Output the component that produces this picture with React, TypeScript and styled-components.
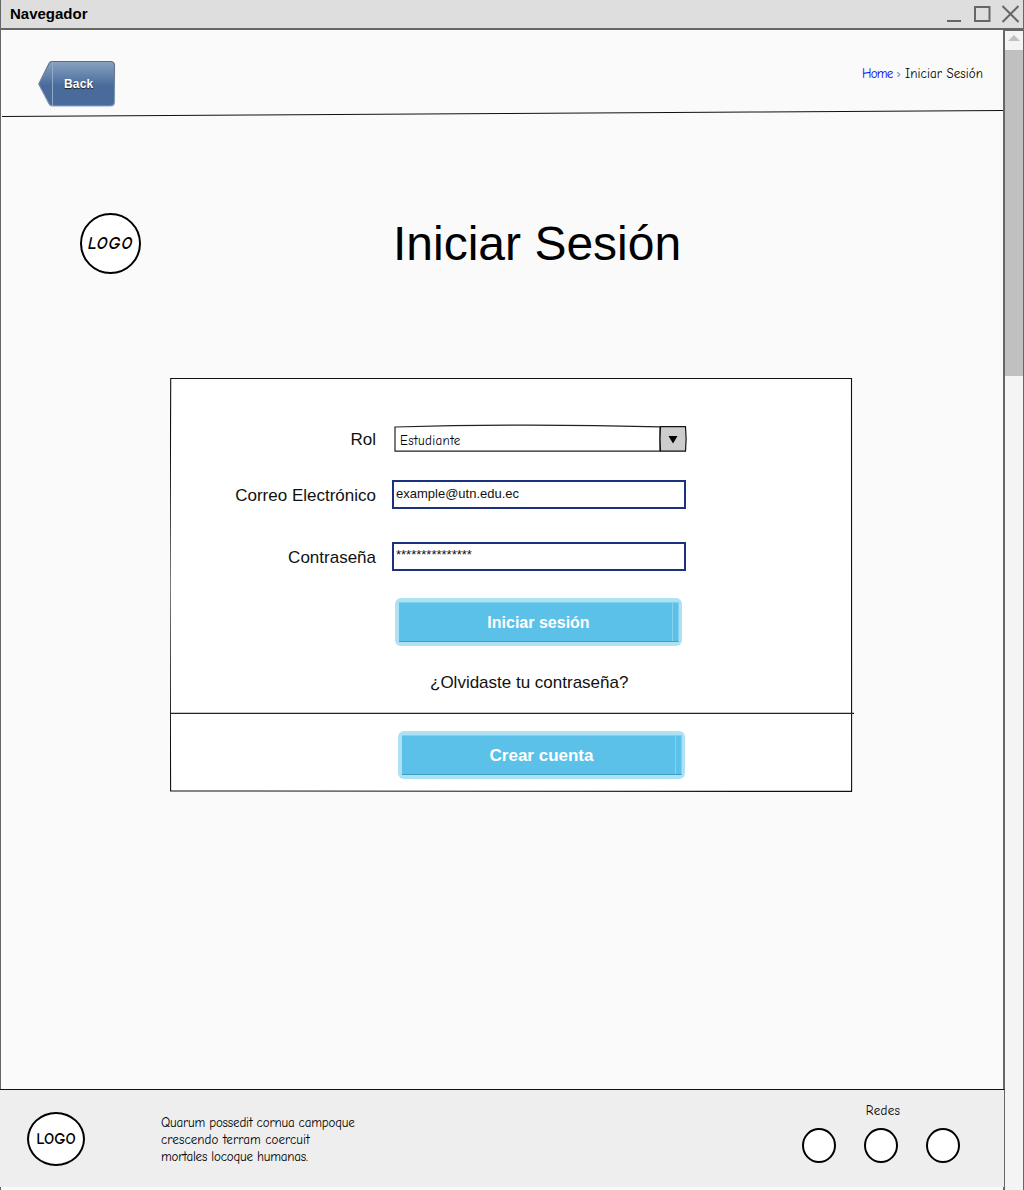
import React from "react";
import styled, { createGlobalStyle } from "styled-components";

const hand = '"Comic Sans MS", "Comic Neue", "Open Sans", sans-serif';

const GlobalStyle = createGlobalStyle`
  *, *::before, *::after { box-sizing: border-box; }
  body {
    margin: 0;
    color: #000;
    background: #fafafa;
    font-family: Arial, "Liberation Sans", sans-serif;
  }
`;

const Window = styled.div`
  display: flex;
  flex-direction: column;
  width: 1024px;
  height: 1190px;
  overflow: hidden;
  background: #fafafa;
`;

const TitleBar = styled.header`
  display: flex;
  align-items: center;
  justify-content: space-between;
  flex: none;
  height: 30px;
  padding: 0 4px 0 9px;
  border: solid #666;
  border-width: 0 1px 2px;
  background: #dedede;
`;

const WindowTitle = styled.span`
  font-size: 15px;
  font-weight: 700;
  line-height: 16px;
`;

const WindowControls = styled.svg`
  display: block;
  width: 74px;
  height: 20px;
  margin-right: -2px;
`;

const Body = styled.div`
  display: flex;
  flex: 1;
  min-height: 0;
`;

const Viewport = styled.main`
  display: flex;
  flex-direction: column;
  width: 1003px;
`;

const Content = styled.div`
  flex: none;
  height: 1059px;
  border-left: 1px solid #666;
`;

const ScrollTrack = styled.aside`
  width: 21px;
  border: solid #666;
  border-width: 1px 1px 0 2px;
  background: #f4f4f4;
`;

const ScrollUp = styled.div`
  display: flex;
  justify-content: center;
  height: 19px;
  padding-top: 4px;
`;

const ScrollThumb = styled.div`
  height: 326px;
  background: #c0c0c0;
`;

const NavBar = styled.nav`
  display: flex;
  justify-content: space-between;
  height: 79px;
  padding: 30px 20px 0 36px;
`;

const BackButton = styled.div`
  display: grid;
  width: 79px;
  height: 48px;
  & > * { grid-area: 1 / 1; }
`;

const BackLabel = styled.span`
  align-self: center;
  padding: 0 0 1px 27px;
  color: #fff;
  font-size: 12px;
  font-weight: 700;
  line-height: 14px;
  letter-spacing: 0.15px;
  text-shadow: 0 1px 1px #222;
`;

const Hand = styled.span<{ $spacing?: number; $color?: string }>`
  font-family: ${hand};
  font-size: 13px;
  line-height: 17px;
  letter-spacing: ${(p) => p.$spacing ?? 0}px;
  color: ${(p) => p.$color ?? "#000"};
  white-space: nowrap;
`;

const Breadcrumbs = styled.div`
  display: flex;
  gap: 4px;
  padding-top: 5px;
`;

const HeaderRule = styled.svg`
  display: block;
  width: 1002px;
  height: 10px;
`;

const Hero = styled.section`
  display: flex;
  align-items: center;
  height: 63px;
  margin-top: 93px;
  padding-left: 79px;
`;

const Logo = styled.div<{ $w: number; $h: number }>`
  display: flex;
  align-items: center;
  justify-content: center;
  flex: none;
  width: ${(p) => p.$w}px;
  height: ${(p) => p.$h}px;
  border: 2px solid #000;
  border-radius: 50%;
  background: #fff;
`;

const LogoText = styled.span<{ $large?: boolean }>`
  font-family: ${hand};
  font-size: ${(p) => (p.$large ? 17 : 16)}px;
  font-style: ${(p) => (p.$large ? "italic" : "normal")};
  font-weight: 700;
  line-height: 18px;
  letter-spacing: ${(p) => (p.$large ? 0.9 : 0)}px;
`;

const Heading = styled.h1`
  margin: 0 0 0 252px;
  font-size: 48px;
  font-weight: 400;
  line-height: 56px;
`;

const Card = styled.section`
  display: grid;
  width: 684px;
  height: 414px;
  margin: 103px 0 0 169px;
  & > * { grid-area: 1 / 1; }
`;

const CardOutline = styled.svg`
  display: block;
  width: 684px;
  height: 414px;
`;

const CardContent = styled.div`
  display: flex;
  flex-direction: column;
  padding-top: 46px;
`;

const Field = styled.div<{ $height: number; $after: number }>`
  display: grid;
  grid-template-columns: 206px 296px;
  column-gap: 16px;
  align-items: center;
  height: ${(p) => p.$height}px;
  margin-bottom: ${(p) => p.$after}px;
`;

const Label = styled.span`
  padding-top: 2px;
  color: #111;
  font-size: 17px;
  line-height: 20px;
  text-align: right;
`;

const SelectBox = styled.div`
  display: grid;
  height: 30px;
  & > * { grid-area: 1 / 1; }
`;

const SelectValue = styled.div`
  display: flex;
  align-items: center;
  padding: 2px 0 0 8px;
`;

const TextBox = styled.div<{ $top: number }>`
  width: 294px;
  height: 29px;
  padding: ${(p) => p.$top}px 2px 0;
  border: 2px solid #1b3281;
  background: #fff;
  color: #111;
  font-size: 13px;
  line-height: 16px;
`;

const ActionButton = styled.div<{ $left: number }>`
  display: flex;
  flex: none;
  width: 287px;
  height: 48px;
  margin-left: ${(p) => p.$left}px;
  padding: 4px 3px 4px 4px;
  border-radius: 6px;
  background: #ade1f4;
`;

const ActionFace = styled.div<{ $size: number }>`
  display: flex;
  align-items: center;
  justify-content: center;
  flex: 1;
  padding-top: 2px;
  border: solid;
  border-width: 1px 1px 1px 0;
  border-color: #82d0ee #82d0ee #3e9dc1;
  background: linear-gradient(#86d2ef, #86d2ef) right 5px top / 1px 100% no-repeat, #5bc1e9;
  color: #fff;
  font-size: ${(p) => p.$size}px;
  font-weight: 700;
  line-height: 20px;
`;

const ForgotLink = styled.div`
  height: 20px;
  margin: 27px 0 0 260px;
  color: #111;
  font-size: 17px;
  line-height: 20px;
`;

const CardFooter = styled.div`
  padding-top: 38px;
`;

const Footer = styled.footer`
  display: flex;
  flex: none;
  width: 1005px;
  height: 98px;
  position: relative;
  padding: 22px 0 0 27px;
  border-top: 1px solid #111;
  border-right: 1px solid #666;
  background: #eee;
`;

const Blurb = styled.div`
  display: flex;
  flex: none;
  flex-direction: column;
  width: 200px;
  margin: 2px 0 0 76px;
`;

const Social = styled.div`
  display: flex;
  flex: none;
  flex-direction: column;
  align-items: center;
  width: 158px;
  margin: -10px 0 0 441px;
`;

const SocialTitle = styled.div`
  display: flex;
  padding-left: 4px;
`;

const SocialRow = styled.div`
  display: flex;
  justify-content: space-between;
  width: 158px;
  margin-top: 9px;
`;

const SocialDot = styled.div`
  width: 34px;
  height: 35px;
  border: 2px solid #000;
  border-radius: 50%;
  background: #fff;
`;

const WindowEdge = styled.div`
  flex: 1;
  border-left: 1px solid #666;
`;

export default function App() {
  return (
    <>
      <GlobalStyle />
      <Window>
        <TitleBar>
          <WindowTitle>Navegador</WindowTitle>
          <WindowControls viewBox="0 0 74 20" fill="none" stroke="#666" strokeWidth="2">
            <path d="M0 17H14M28 3H42.5V17H28Z" />
            <path d="M55.5 2L71.5 18M71.5 2L55.5 18" />
          </WindowControls>
        </TitleBar>
        <Body>
          <Viewport>
            <Content>
              <NavBar>
                <BackButton>
                  <svg width="79" height="48" viewBox="0 0 79 48">
                    <defs>
                      <linearGradient id="back" x1="0" y1="0" x2="0" y2="1">
                        <stop offset="0" stopColor="#89a2c1" />
                        <stop offset="0.55" stopColor="#486b9b" />
                        <stop offset="1" stopColor="#486b9b" />
                      </linearGradient>
                      <linearGradient id="rim" x1="0" y1="0" x2="0" y2="1">
                        <stop offset="0" stopColor="#5c6b80" />
                        <stop offset="1" stopColor="#8ba3c4" />
                      </linearGradient>
                    </defs>
                    <path d="M15 1.5H73.5Q77.5 1.5 77.5 5.5V42Q77.5 46 73.5 46H15Q13 46 12 44L1.7 24L12 3.5Q13 1.5 15 1.5Z" fill="url(#back)" stroke="url(#rim)" strokeWidth="1.1" />
                    <path d="M15.5 2V46" stroke="#91a8c6" />
                  </svg>
                  <BackLabel>Back</BackLabel>
                </BackButton>
                <Breadcrumbs>
                  <Hand $color="#00f" $spacing={-0.75}>Home</Hand>
                  <Hand $color="#777">›</Hand>
                  <Hand $spacing={0.08}>Iniciar Sesión</Hand>
                </Breadcrumbs>
              </NavBar>
              <HeaderRule viewBox="0 0 1002 10">
                <path d="M1 7.5L250 6L502 4.5L751 3L1002 1.5" fill="none" stroke="#111" strokeWidth="1.1" />
              </HeaderRule>
              <Hero>
                <Logo $w={61} $h={61}><LogoText $large>LOGO</LogoText></Logo>
                <Heading>Iniciar Sesión</Heading>
              </Hero>
              <Card>
                <CardOutline viewBox="0 0 684 414">
                  <path d="M0.7 0.5H681.5Q682.3 207 681.6 413.4L0.6 413L0 207Z" fill="#fff" stroke="#111" strokeWidth="1.1" />
                  <path d="M0 335.3H684" stroke="#222" strokeWidth="1.3" />
                </CardOutline>
                <CardContent>
                  <Field $height={29} $after={27}>
                    <Label>Rol</Label>
                    <SelectBox>
                      <svg width="296" height="30" viewBox="0 0 296 30">
                        <path d="M3 3Q135 -0.8 268 2.8V27.2H3Z" fill="#fff" stroke="#222" strokeWidth="1.2" />
                        <path d="M268.5 2.7H293.5Q294.8 15 293.5 27.2H268.5Q267.5 15 268.5 2.7Z" fill="#ccc" stroke="#111" strokeWidth="1.2" />
                        <path d="M276.5 12H285.5L281 19.5Z" />
                      </svg>
                      <SelectValue><Hand $spacing={0.35}>Estudiante</Hand></SelectValue>
                    </SelectBox>
                  </Field>
                  <Field $height={29} $after={33}>
                    <Label>Correo Electrónico</Label>
                    <TextBox $top={4}>example@utn.edu.ec</TextBox>
                  </Field>
                  <Field $height={29} $after={27}>
                    <Label>Contraseña</Label>
                    <TextBox $top={3}>***************</TextBox>
                  </Field>
                  <ActionButton $left={225}><ActionFace $size={16}>Iniciar sesión</ActionFace></ActionButton>
                  <ForgotLink>¿Olvidaste tu contraseña?</ForgotLink>
                  <CardFooter>
                    <ActionButton $left={228}><ActionFace $size={17}>Crear cuenta</ActionFace></ActionButton>
                  </CardFooter>
                </CardContent>
              </Card>
            </Content>
            <Footer>
              <Logo $w={58} $h={54}><LogoText>LOGO</LogoText></Logo>
              <Blurb>
                <Hand $spacing={-0.17}>Quarum possedit cornua campoque</Hand>
                <Hand $spacing={0.08}>crescendo terram coercuit</Hand>
                <Hand $spacing={-0.18}>mortales locoque humanas.</Hand>
              </Blurb>
              <Social>
                <SocialTitle><Hand $spacing={0.3}>Redes</Hand></SocialTitle>
                <SocialRow>
                  <SocialDot />
                  <SocialDot />
                  <SocialDot />
                </SocialRow>
              </Social>
            </Footer>
            <WindowEdge />
          </Viewport>
          <ScrollTrack>
            <ScrollUp>
              <svg width="12" height="6" viewBox="0 0 12 6"><path d="M0 6L6 0L12 6Z" fill="#c0c0c0" /></svg>
            </ScrollUp>
            <ScrollThumb />
          </ScrollTrack>
        </Body>
      </Window>
    </>
  );
}
